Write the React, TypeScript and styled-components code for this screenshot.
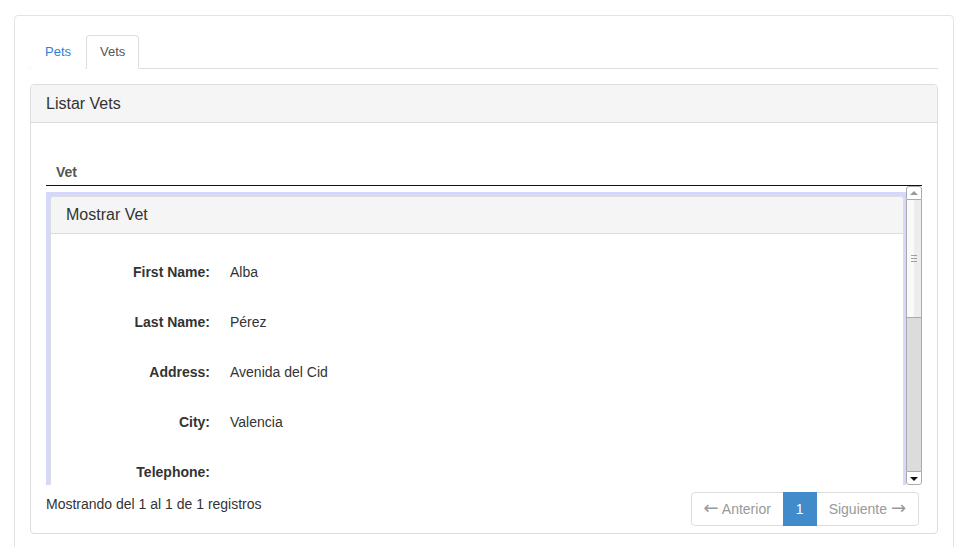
import React from "react";
import styled, { createGlobalStyle } from "styled-components";

const Global = createGlobalStyle`
  html, body { margin: 0; padding: 0; background: #fff; }
  body {
    font-family: "Liberation Sans", Arial, Helvetica, sans-serif;
    font-size: 14px;
    line-height: 20px;
    color: #333;
  }
  * { box-sizing: border-box; }
`;

const Page = styled.div`
  padding: 15px 14px 0;
`;

const OuterCard = styled.div`
  border: 1px solid #e3e3e3;
  border-radius: 4px;
  padding: 19px 15px 15px;
  min-height: 560px;
`;

const TabList = styled.ul`
  display: flex;
  gap: 1px;
  margin: 0;
  padding: 0 0 0 1px;
  list-style: none;
  border-bottom: 1px solid #ddd;
`;

const Tab = styled.li<{ $active?: boolean }>`
  margin: 0 0 -1px 0;
  padding: 8px 13px;
  font-size: 13px;
  line-height: 16px;
  border: 1px solid ${(p) => (p.$active ? "#ddd" : "transparent")};
  border-bottom-color: ${(p) => (p.$active ? "#fff" : "transparent")};
  border-radius: 4px 4px 0 0;
  background: #fff;
  color: ${(p) => (p.$active ? "#555" : "#2f7fd8")};
  cursor: pointer;
`;

const Panel = styled.div<{ $mt?: number }>`
  margin-top: ${(p) => p.$mt ?? 0}px;
  border: 1px solid #ddd;
  border-radius: 4px;
  background: #fff;
  overflow: hidden;
`;

const PanelHeading = styled.div<{ $lh?: number }>`
  padding: 10px 15px;
  background: #f5f5f5;
  border-bottom: 1px solid #ddd;
  font-size: 16px;
  line-height: ${(p) => p.$lh ?? 17}px;
  color: #333;
`;

const ListBody = styled.div`
  padding: 30px 15px 7px;
`;

const HeadCell = styled.div`
  padding: 9px 10px 3px;
  font-weight: bold;
  color: #555;
  border-bottom: 1px solid #111;
`;

const ScrollArea = styled.div`
  display: flex;
  height: 299px;
`;

const Viewport = styled.div`
  flex: 1;
  min-width: 0;
  overflow: hidden;
  padding-top: 6px;
`;

const ScrollBar = styled.div`
  width: 16px;
  display: flex;
  flex-direction: column;
`;

const ScrollButton = styled.div<{ $down?: boolean }>`
  height: 14px;
  flex: none;
  border: 1px solid #aaa;
  border-radius: ${(p) => (p.$down ? "0 0 3px 3px" : "3px 3px 0 0")};
  background: #fff;
  display: flex;
  align-items: center;
  justify-content: center;

  &::before {
    content: "";
    width: 0;
    height: 0;
    border-left: 4px solid transparent;
    border-right: 4px solid transparent;
    ${(p) =>
      p.$down
        ? "border-top: 4px solid #111; margin-top: 1px;"
        : "border-bottom: 4px solid #999; margin-top: -1px;"}
  }
`;

const Thumb = styled.div`
  height: 118px;
  flex: none;
  border: 1px solid #aaa;
  border-top: none;
  background: linear-gradient(to right, #fafafa 50%, #ededed 50%);
  display: flex;
  align-items: center;
  justify-content: center;

  &::before {
    content: "";
    width: 6px;
    height: 7px;
    background: repeating-linear-gradient(to bottom, #a0a0a0 0 1px, transparent 1px 3px);
  }
`;

const Track = styled.div`
  flex: 1;
  background: #dcdcdc;
  border-left: 1px solid #aaa;
  border-right: 1px solid #aaa;
`;

const SelectedRow = styled.div`
  background: #d5d8fc;
  padding: 4px 2px 4px 4px;
`;

const DetailBody = styled.div`
  padding: 28px 15px 15px;
  min-height: 630px;
  display: flex;
  flex-direction: column;
  gap: 30px;
`;

const Field = styled.div`
  display: grid;
  grid-template-columns: 144px 1fr;
  column-gap: 20px;
  line-height: 20px;
`;

const Label = styled.span`
  text-align: right;
  font-weight: bold;
  color: #333;
`;

const Value = styled.span`
  color: #333;
`;

const Footer = styled.div`
  display: flex;
  justify-content: space-between;
  align-items: flex-start;
  margin-top: 7px;
`;

const Info = styled.div`
  padding-top: 2px;
  color: #333;
`;

const Pagination = styled.ul`
  display: flex;
  margin: 0 3px 0 0;
  padding: 0;
  list-style: none;
`;

const PageItem = styled.li<{ $active?: boolean; $first?: boolean; $last?: boolean }>`
  padding: 6px 12px;
  line-height: 20px;
  margin-left: ${(p) => (p.$first ? 0 : -1)}px;
  border: 1px solid ${(p) => (p.$active ? "#428bca" : "#ddd")};
  background: ${(p) => (p.$active ? "#428bca" : "#fff")};
  color: ${(p) => (p.$active ? "#fff" : "#999")};
  border-radius: ${(p) => (p.$first ? "4px 0 0 4px" : p.$last ? "0 4px 4px 0" : "0")};
  position: relative;
  z-index: ${(p) => (p.$active ? 1 : 0)};
`;

const Arrow = styled.span`
  font-family: "DejaVu Sans", sans-serif;
  font-size: 18px;
  line-height: 14px;
`;

const fields: [string, string][] = [
  ["First Name:", "Alba"],
  ["Last Name:", "Pérez"],
  ["Address:", "Avenida del Cid"],
  ["City:", "Valencia"],
  ["Telephone:", ""],
];

export default function App() {
  return (
    <>
      <Global />
      <Page>
        <OuterCard>
          <TabList>
            <Tab>Pets</Tab>
            <Tab $active>Vets</Tab>
          </TabList>
          <Panel $mt={15}>
            <PanelHeading>Listar Vets</PanelHeading>
            <ListBody>
              <HeadCell>Vet</HeadCell>
              <ScrollArea>
                <Viewport>
                  <SelectedRow>
                    <Panel>
                      <PanelHeading $lh={16}>Mostrar Vet</PanelHeading>
                      <DetailBody>
                        {fields.map(([l, v]) => (
                          <Field key={l}>
                            <Label>{l}</Label>
                            <Value>{v}</Value>
                          </Field>
                        ))}
                      </DetailBody>
                    </Panel>
                  </SelectedRow>
                </Viewport>
                <ScrollBar>
                  <ScrollButton />
                  <Thumb />
                  <Track />
                  <ScrollButton $down />
                </ScrollBar>
              </ScrollArea>
              <Footer>
                <Info>Mostrando del 1 al 1 de 1 registros</Info>
                <Pagination>
                  <PageItem $first>
                    <Arrow>←</Arrow> Anterior
                  </PageItem>
                  <PageItem $active>1</PageItem>
                  <PageItem $last>
                    Siguiente <Arrow>→</Arrow>
                  </PageItem>
                </Pagination>
              </Footer>
            </ListBody>
          </Panel>
        </OuterCard>
      </Page>
    </>
  );
}
